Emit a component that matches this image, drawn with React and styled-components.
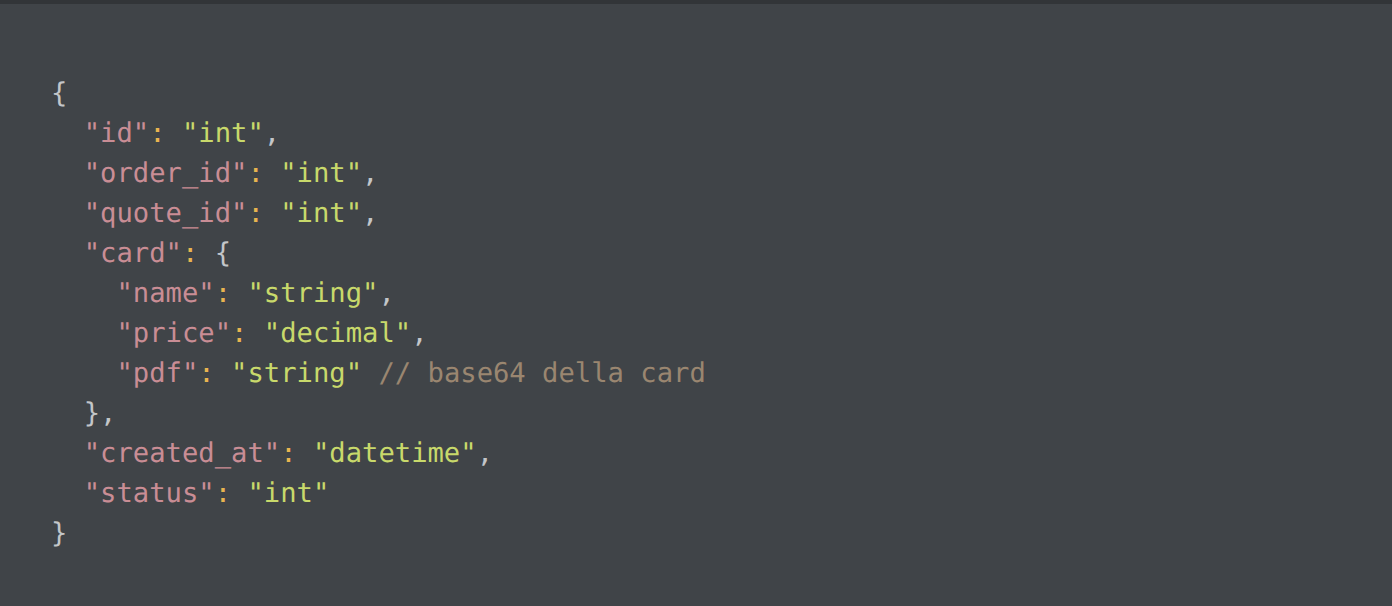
import React from 'react'
import styled, { createGlobalStyle } from 'styled-components'

const GlobalStyle = createGlobalStyle`
	html, body {
		margin: 0;
		padding: 0;
		background: #404448;
	}
`

const Page = styled.div`
	width: 1392px;
	height: 606px;
	background: #404448;
	border-top: 4px solid #323538;
	box-sizing: border-box;
	overflow: hidden;
`

const CodeBlock = styled.pre`
	margin: 0;
	padding: 70px 0 0 51px;
	font-family: "DejaVu Sans Mono", "Liberation Mono", monospace;
	font-size: 27.2px;
	line-height: 40px;
	color: #c3c6c9;
	text-rendering: geometricPrecision;
`

const Line = styled.div`
	padding-left: ${(p) => p.indent * 2}ch;
	white-space: pre;
`

const Key = styled.span`
	color: #c98d95;
`
const Str = styled.span`
	color: #c8d96b;
`
const Colon = styled.span`
	color: #e8b450;
`
const Comment = styled.span`
	color: #9a8670;
`

const fields = [
	{ indent: 1, key: 'id', value: 'int', comma: true },
	{ indent: 1, key: 'order_id', value: 'int', comma: true },
	{ indent: 1, key: 'quote_id', value: 'int', comma: true },
]

const cardFields = [
	{ indent: 2, key: 'name', value: 'string', comma: true },
	{ indent: 2, key: 'price', value: 'decimal', comma: true },
	{ indent: 2, key: 'pdf', value: 'string', comment: '// base64 della card' },
]

const tailFields = [
	{ indent: 1, key: 'created_at', value: 'datetime', comma: true },
	{ indent: 1, key: 'status', value: 'int' },
]

const Field = ({ f }) => (
	<Line indent={f.indent}>
		<Key>"{f.key}"</Key>
		<Colon>:</Colon> <Str>"{f.value}"</Str>
		{f.comma && ','}
		{f.comment && <> <Comment>{f.comment}</Comment></>}
	</Line>
)

export default function App() {
	return (
		<Page>
			<GlobalStyle />
			<CodeBlock>
				<Line indent={0}>{'{'}</Line>
				{fields.map((f) => <Field key={f.key} f={f} />)}
				<Line indent={1}>
					<Key>"card"</Key>
					<Colon>:</Colon> {'{'}
				</Line>
				{cardFields.map((f) => <Field key={f.key} f={f} />)}
				<Line indent={1}>{'},'}</Line>
				{tailFields.map((f) => <Field key={f.key} f={f} />)}
				<Line indent={0}>{'}'}</Line>
			</CodeBlock>
		</Page>
	)
}
